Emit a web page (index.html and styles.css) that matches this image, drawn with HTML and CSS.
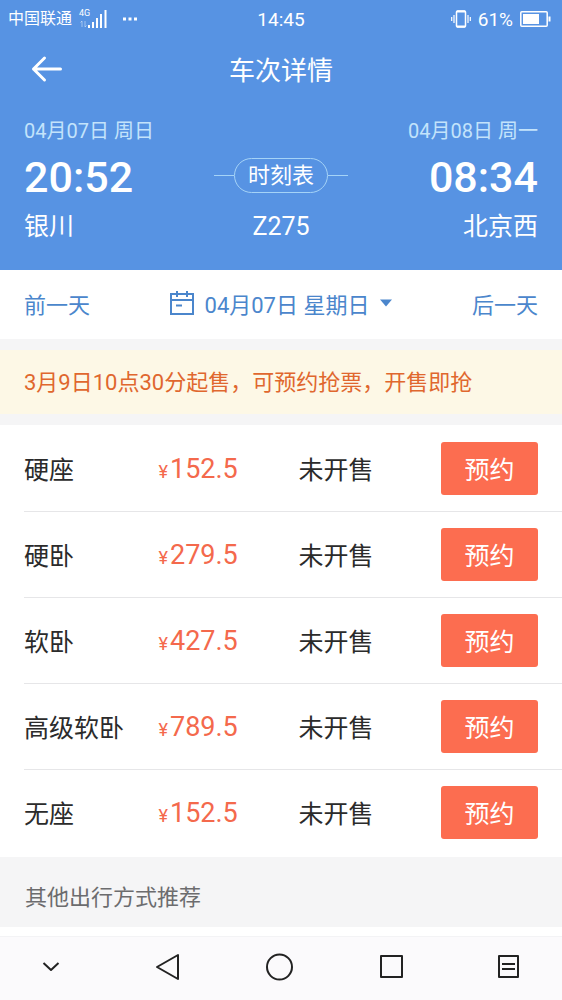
FILE: index.html
```html
<!DOCTYPE html>
<html lang="zh-CN">
<head>
<meta charset="utf-8">
<meta name="viewport" content="width=device-width, initial-scale=1">
<title>车次详情</title>
<link rel="stylesheet" href="styles.css">
</head>
<body>
<header class="hero">
  <div class="status-bar">
    <div class="status-left">
      <span class="carrier">中国联通</span>
      <span class="network">
        <span class="network-type">4G</span>
        <svg class="signal" width="30" height="20" viewBox="0 0 30 20" aria-hidden="true">
          <path d="M3 12v6M1.500 13.500L3 12M6 12v6M7.500 16.500L6 18" stroke="#fff" stroke-opacity=".45" fill="none"/>
          <path d="M10 16v3M14 13v6M18 9v10M22 5v14M26.500 1v18" stroke="#fff" stroke-width="2" fill="none"/>
        </svg>
      </span>
      <svg width="14" height="4" viewBox="0 0 14 4" aria-hidden="true"><path d="M0 .5h3v3H0zM5.500 .5h3v3h-3zM11 .5h3v3h-3z" fill="#fff"/></svg>
    </div>
    <time class="clock">14:45</time>
    <div class="status-right">
      <svg width="20" height="20" viewBox="0 0 20 20" fill="none" stroke="#fff" aria-hidden="true">
        <rect x="5.500" y="2" width="9" height="16" rx="1" stroke-width="1.500"/>
        <path d="M6 2.500h8M6 17.500h8" stroke-width="2"/>
        <path d="M3 6v8M.7 8v4M17 6v8M19.300 8v4" stroke-width="1.200"/>
      </svg>
      <span class="battery-level">61%</span>
      <svg width="31" height="16" viewBox="0 0 31 16" aria-hidden="true">
        <rect x=".8" y=".8" width="26.400" height="14.400" rx="1" fill="none" stroke="#fff" stroke-width="1.500"/>
        <path d="M3 3h16v10H3z" fill="#fff"/>
        <path d="M29.500 5.500v5" stroke="#fff" stroke-width="2"/>
      </svg>
    </div>
  </div>

  <div class="title-bar">
    <button class="back" type="button" aria-label="返回">
      <svg width="34" height="30" viewBox="0 0 34 30" fill="none" stroke="#fff" stroke-width="3" stroke-linecap="round" stroke-linejoin="round" aria-hidden="true"><path d="M30.500 15H3.500M14.500 4L3.500 15l11 11"/></svg>
    </button>
    <h1 class="title">车次详情</h1>
  </div>

  <section class="trip">
    <div class="stop">
      <span class="stop-date">04月07日 周日</span>
      <time class="stop-time">20:52</time>
      <span class="station">银川</span>
    </div>
    <div class="train">
      <button class="timetable" type="button"><span class="pill">时刻表</span></button>
      <span class="station">Z275</span>
    </div>
    <div class="stop stop-end">
      <span class="stop-date">04月08日 周一</span>
      <time class="stop-time">08:34</time>
      <span class="station">北京西</span>
    </div>
  </section>
</header>

<main class="content">
  <nav class="date-bar">
    <button class="day" type="button">前一天</button>
    <button class="day current" type="button">
      <svg width="24" height="24" viewBox="0 0 24 24" fill="none" stroke="#4b86cc" stroke-width="2" aria-hidden="true"><path d="M1 3h22v20H1zM1 9h22M7 0v6M17 0v6M6 14.500h6"/></svg>
      <span>04月07日 星期日</span>
      <svg width="12" height="8" viewBox="0 0 12 8" aria-hidden="true"><path d="M0 .5h12L6 7.500z" fill="#4b86cc"/></svg>
    </button>
    <button class="day" type="button">后一天</button>
  </nav>

  <p class="notice">3月9日10点30分起售，可预约抢票，开售即抢</p>

  <div class="seats">
    <table class="seat-table" aria-label="席别与票价">
      <colgroup><col class="col-name"><col class="col-price"><col class="col-state"><col></colgroup>
      <tbody>
        <tr><th scope="row">硬座</th><td class="price"><span class="yen">¥</span>152.5</td><td>未开售</td><td class="action"><button class="book" type="button">预约</button></td></tr>
        <tr><th scope="row">硬卧</th><td class="price"><span class="yen">¥</span>279.5</td><td>未开售</td><td class="action"><button class="book" type="button">预约</button></td></tr>
        <tr><th scope="row">软卧</th><td class="price"><span class="yen">¥</span>427.5</td><td>未开售</td><td class="action"><button class="book" type="button">预约</button></td></tr>
        <tr><th scope="row">高级软卧</th><td class="price"><span class="yen">¥</span>789.5</td><td>未开售</td><td class="action"><button class="book" type="button">预约</button></td></tr>
        <tr><th scope="row">无座</th><td class="price"><span class="yen">¥</span>152.5</td><td>未开售</td><td class="action"><button class="book" type="button">预约</button></td></tr>
      </tbody>
    </table>
  </div>

  <h2 class="more">其他出行方式推荐</h2>
</main>

<nav class="system-nav" aria-label="系统导航">
  <button type="button" aria-label="收起"><svg width="28" height="28" viewBox="0 0 28 28"><path d="M6.500 10l7.500 7 7.500-7"/></svg></button>
  <button type="button" aria-label="返回"><svg width="28" height="28" viewBox="0 0 28 28"><path d="M27 2v24L6 14z"/></svg></button>
  <button type="button" aria-label="主页"><svg width="28" height="28" viewBox="0 0 28 28"><circle cx="13.500" cy="14" r="12.500"/></svg></button>
  <button type="button" aria-label="最近任务"><svg width="28" height="28" viewBox="0 0 28 28"><rect x="1" y="3" width="21" height="21"/></svg></button>
  <button type="button" aria-label="菜单"><svg width="28" height="28" viewBox="0 0 28 28"><path d="M5 3h19v21H5zM8 11h13M8 16h13"/></svg></button>
</nav>
</body>
</html>
```

FILE: styles.css
```css
* {
  box-sizing: border-box;
}

body {
  margin: 0;
  min-height: 100vh;
  display: flex;
  flex-direction: column;
  background: #fff;
  color: #2b2b2b;
  font-family: Roboto, "Noto Sans CJK SC", sans-serif;
}

button {
  margin: 0;
  padding: 0;
  border: 0;
  background: none;
  color: inherit;
  font: inherit;
  cursor: pointer;
}

svg {
  display: block;
  flex: none;
}

.hero {
  background: #5793e3;
  color: #fff;
}

.status-bar {
  display: grid;
  grid-template-columns: 1fr auto 1fr;
  align-items: center;
  height: 38px;
  padding: 0 8px;
}

.status-left,
.status-right {
  display: flex;
  align-items: center;
}

.status-left {
  gap: 14px;
}

.carrier {
  font-size: 16px;
  line-height: 20px;
  padding-bottom: 1px;
}

.network {
  position: relative;
  margin-left: -7px;
}

.network-type {
  position: absolute;
  left: 0;
  top: -1px;
  font-size: 9px;
  line-height: 10px;
}

.clock,
.battery-level {
  font-size: 19px;
}

.status-right {
  justify-content: flex-end;
  gap: 7px;
  padding-right: 3px;
}

.title-bar {
  display: grid;
  grid-template-columns: 34px 1fr 34px;
  align-items: center;
  height: 62px;
  padding: 0 30px;
}

.title {
  margin: 0;
  padding-bottom: 2px;
  font-size: 26px;
  font-weight: 400;
  text-align: center;
}

.trip {
  display: grid;
  grid-template-columns: 1fr auto 1fr;
  align-items: end;
  padding: 16px 24px 24px;
}

.stop,
.train {
  display: flex;
  flex-direction: column;
}

.stop-end {
  align-items: flex-end;
}

.train {
  align-items: center;
}

.stop-date {
  color: #c3e3fb;
  font-size: 20px;
  line-height: 30px;
}

.stop-time {
  font-size: 43px;
  font-weight: 500;
  line-height: 62px;
}

.station {
  font-size: 25px;
  line-height: 38px;
}

.timetable {
  display: flex;
  align-items: center;
  height: 62px;
  padding-bottom: 4px;
  color: #fff;
}

.timetable::before,
.timetable::after {
  content: "";
  width: 20px;
  height: 1px;
  background: #a5d3f7;
}

.pill {
  padding: 0 13px;
  border: 1px solid #a5d3f7;
  border-radius: 18px;
  font-size: 22px;
  line-height: 33px;
}

.content {
  border-bottom: 9px solid #fff;
  background: #f5f5f6;
}

.date-bar {
  display: flex;
  align-items: center;
  justify-content: space-between;
  height: 69px;
  padding: 0 24px 3px;
  background: #fff;
}

.day {
  color: #4b86cc;
  font-size: 22px;
}

.current {
  display: flex;
  align-items: center;
  gap: 11px;
}

.notice {
  margin: 11px 0;
  padding: 17px 24px 15px;
  background: #fdf8e6;
  color: #e0672e;
  font-size: 22px;
  line-height: 32px;
}

.seats {
  padding: 1px 0 1px 24px;
  background: #fff;
}

.seat-table {
  width: 100%;
  table-layout: fixed;
  border-collapse: separate;
  border-spacing: 0;
  font-size: 25px;
}

.col-name {
  width: 25%;
}

.col-price,
.col-state {
  width: 26%;
}

.seat-table th,
.seat-table td {
  height: 86px;
  padding: 0 0 2px;
  border-bottom: 1px solid #e6e6e8;
  font-weight: 400;
  text-align: left;
  white-space: nowrap;
}

.seat-table tr:last-child > * {
  border-bottom-color: transparent;
}

.seat-table .price {
  padding-bottom: 0;
  color: #f4694c;
  font-size: 27px;
}

.yen {
  margin-right: 2px;
  font-size: 18px;
}

.seat-table .action {
  padding: 0 24px 0 0;
  text-align: right;
}

.book {
  width: 97px;
  height: 53px;
  padding-bottom: 2px;
  border-radius: 3px;
  background: #fc6d50;
  color: #fff;
  font-size: 25px;
  vertical-align: middle;
}

.more {
  margin: 0;
  padding: 25px 25px 13px;
  color: #6c6c6e;
  font-size: 22px;
  font-weight: 400;
  line-height: 32px;
}

.system-nav {
  display: flex;
  align-items: center;
  justify-content: space-between;
  height: 64px;
  margin-top: auto;
  padding: 0 40px 3px 37px;
  border-top: 1px solid #f3f3f5;
  background: #fbfafc;
}

.system-nav svg {
  fill: none;
  stroke: #222;
  stroke-width: 2;
  stroke-linejoin: round;
}
```
